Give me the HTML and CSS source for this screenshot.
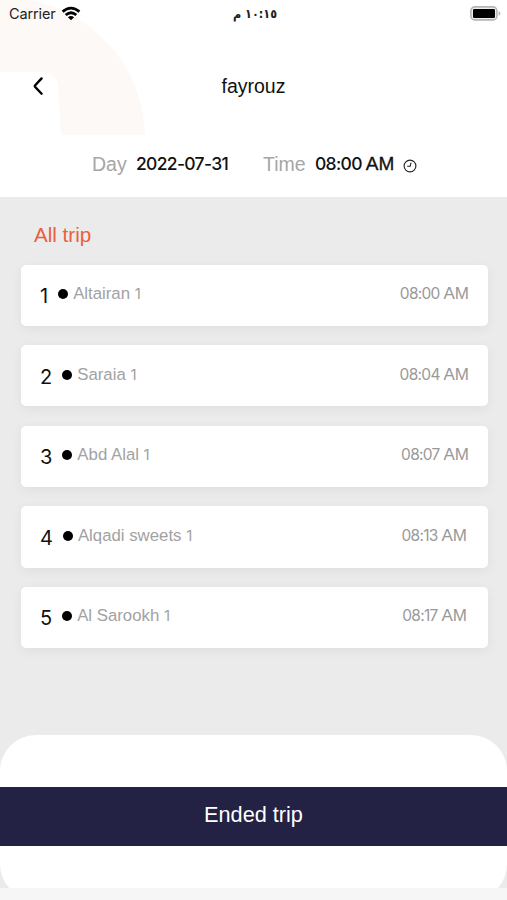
FILE: index.html
```html
<!DOCTYPE html>
<html lang="en">
<head>
<meta charset="utf-8">
<meta name="viewport" content="width=device-width, initial-scale=1">
<title>Trip</title>
<link rel="stylesheet" href="styles.css">
</head>
<body>
<div class="screen">
  <header class="header">
    <svg class="arc" width="150" height="135" viewBox="0 0 150 135"><path d="M0 0H30C93 13 143 65 145 135H61L58 85Q56 73 42 72H0Z" fill="#fdf9f6"/></svg>
    <div class="status">
      <div class="carrier"><span class="carrier-name">Carrier</span>
        <svg width="20" height="16" viewBox="0 0 20 16"><g fill="none" stroke="#000" stroke-width="2.8"><path d="M1.6 5.6Q10-1.4 18.4 5.6"/><path d="M4.7 9Q10 4.5 15.3 9"/></g><path d="M6.9 11.2Q10 8.6 13.1 11.2L10 14.3Z"/></svg>
      </div>
      <div class="clock" dir="rtl" lang="ar">١٠:١٥ م</div>
      <svg class="battery" width="31" height="15" viewBox="0 0 31 15"><rect x=".9" y=".9" width="26" height="13" rx="4" fill="#eee" stroke="#b5b5b5" stroke-width="1.6"/><rect x="3" y="3" width="22" height="9" rx="1.2"/><path d="M28.6 5.3q1.8.5 1.8 2.2t-1.8 2.2Z" fill="#b5b5b5"/></svg>
    </div>
    <div class="titlebar">
      <svg class="back" width="12" height="20" viewBox="0 0 12 20"><path d="M9.6 2.4L3 9.5q-.5.6 0 1.2l6.6 7" fill="none" stroke="#000" stroke-width="2.4" stroke-linecap="round"/></svg>
      <h1 class="title">fayrouz</h1>
    </div>
    <div class="meta">
      <span class="label day">Day</span>
      <span class="value date">2022-07-31</span>
      <span class="label time">Time</span>
      <span class="value hour">08:00 <span class="am">AM</span></span>
      <svg class="clock-icon" width="14" height="14" viewBox="0 0 14 14"><g fill="none" stroke="#222" stroke-width="1.1"><circle cx="7" cy="7" r="5.9"/><path d="M8 3.6L7.2 7.3H4.2"/></g></svg>
    </div>
  </header>
  <main class="main">
    <h2 class="section">All trip</h2>
    <div class="list">
      <div class="card"><span class="num">1</span><span class="dot"></span><span class="name">Altairan <span class="digit">1</span></span><span class="at"><span class="digits">08:00</span> AM</span></div>
      <div class="card"><span class="num">2</span><span class="dot"></span><span class="name">Saraia <span class="digit">1</span></span><span class="at"><span class="digits">08:04</span> AM</span></div>
      <div class="card"><span class="num">3</span><span class="dot"></span><span class="name">Abd Alal <span class="digit">1</span></span><span class="at"><span class="digits">08:07</span> AM</span></div>
      <div class="card"><span class="num">4</span><span class="dot"></span><span class="name">Alqadi sweets <span class="digit">1</span></span><span class="at narrow"><span class="digits">08:13</span> AM</span></div>
      <div class="card"><span class="num">5</span><span class="dot"></span><span class="name">Al Sarookh <span class="digit">1</span></span><span class="at narrow"><span class="digits">08:17</span> AM</span></div>
    </div>
    <div class="sheet"><div class="ended">Ended trip</div></div>
  </main>
</div>
</body>
</html>
```
FILE: styles.css
```css
* { box-sizing: border-box; }
body { margin: 0; font-family: "Liberation Sans", Arial, sans-serif; background: #f6f6f6; }
.screen { width: 507px; height: 900px; overflow: hidden; }
.header { position: relative; height: 196.5px; background: #fff; }
.arc { position: absolute; left: 0; top: 0; }
.status, .titlebar, .meta { position: relative; }
.status { height: 27px; display: grid; grid-template-columns: 1fr auto 1fr; align-items: center; padding: 0 6px 0 9px; }
.carrier { display: flex; align-items: center; gap: 5px; font: 14.5px Inter, sans-serif; color: #222; }
.carrier-name { letter-spacing: -.12px; }
.clock { font: 600 12.5px "DejaVu Sans Condensed", "DejaVu Sans", sans-serif; letter-spacing: -1px; color: #222; }
.battery { justify-self: end; }
.titlebar { height: 118px; display: grid; grid-template-columns: 60px 1fr 60px; align-items: center; }
.back { margin-left: 32px; }
.title { margin: 0; text-align: center; font-size: 19.5px; font-weight: 400; color: #111; }
.meta { height: 38px; display: flex; align-items: center; padding-left: 92px; white-space: nowrap; }
.label { font-size: 19.5px; color: #a6a6a6; }
.day { width: 44px; }
.value { font: 500 17.5px Inter, sans-serif; letter-spacing: -.68px; color: #111; margin-top: -1px; }
.am { font: 19px "Liberation Sans", Arial, sans-serif; letter-spacing: 0; -webkit-text-stroke: .3px #111; }
.date { width: 127px; }
.time { width: 52px; }
.hour { width: 88px; }
.clock-icon { margin-top: 4px; }
.main { height: 691.5px; background: #ebebeb; overflow: hidden; }
.section { margin: 0; height: 68px; padding: 26px 0 0 34px; font-size: 20.6px; line-height: 24px; font-weight: 400; color: #e9603b; }
.list { display: flex; flex-direction: column; gap: 19.2px; padding: 0 19px 0 20.5px; }
.card { height: 61.4px; display: flex; align-items: flex-start; padding: 0 19px 0 19.5px; background: #fff; border-radius: 5px; box-shadow: 0 3px 12px rgba(0,0,0,.055); color: #999; line-height: 20px; white-space: nowrap; }
.num { font: 20px/24px Inter, sans-serif; color: #111; margin-top: 19.5px; }
.dot { width: 10px; height: 10px; border-radius: 50%; background: #000; margin: 24.5px 5px 0 10px; }
.name { font-size: 16.8px; color: #a2a2a2; margin-top: 19.5px; }
.digit, .digits { font-family: Inter, sans-serif; font-size: 15px; }
.digits { font-size: 15.5px; letter-spacing: -.7px; }
.at { margin: 19.5px 0 0 auto; font-size: 17px; color: #999; }
.narrow { margin-right: 2px; }
.sheet { height: 165px; margin-top: 86.5px; padding-top: 52.5px; border-radius: 36px; background: #fff; }
.ended { height: 58.5px; background: #232144; color: #fff; text-align: center; font-size: 21.7px; line-height: 55px; }
```
